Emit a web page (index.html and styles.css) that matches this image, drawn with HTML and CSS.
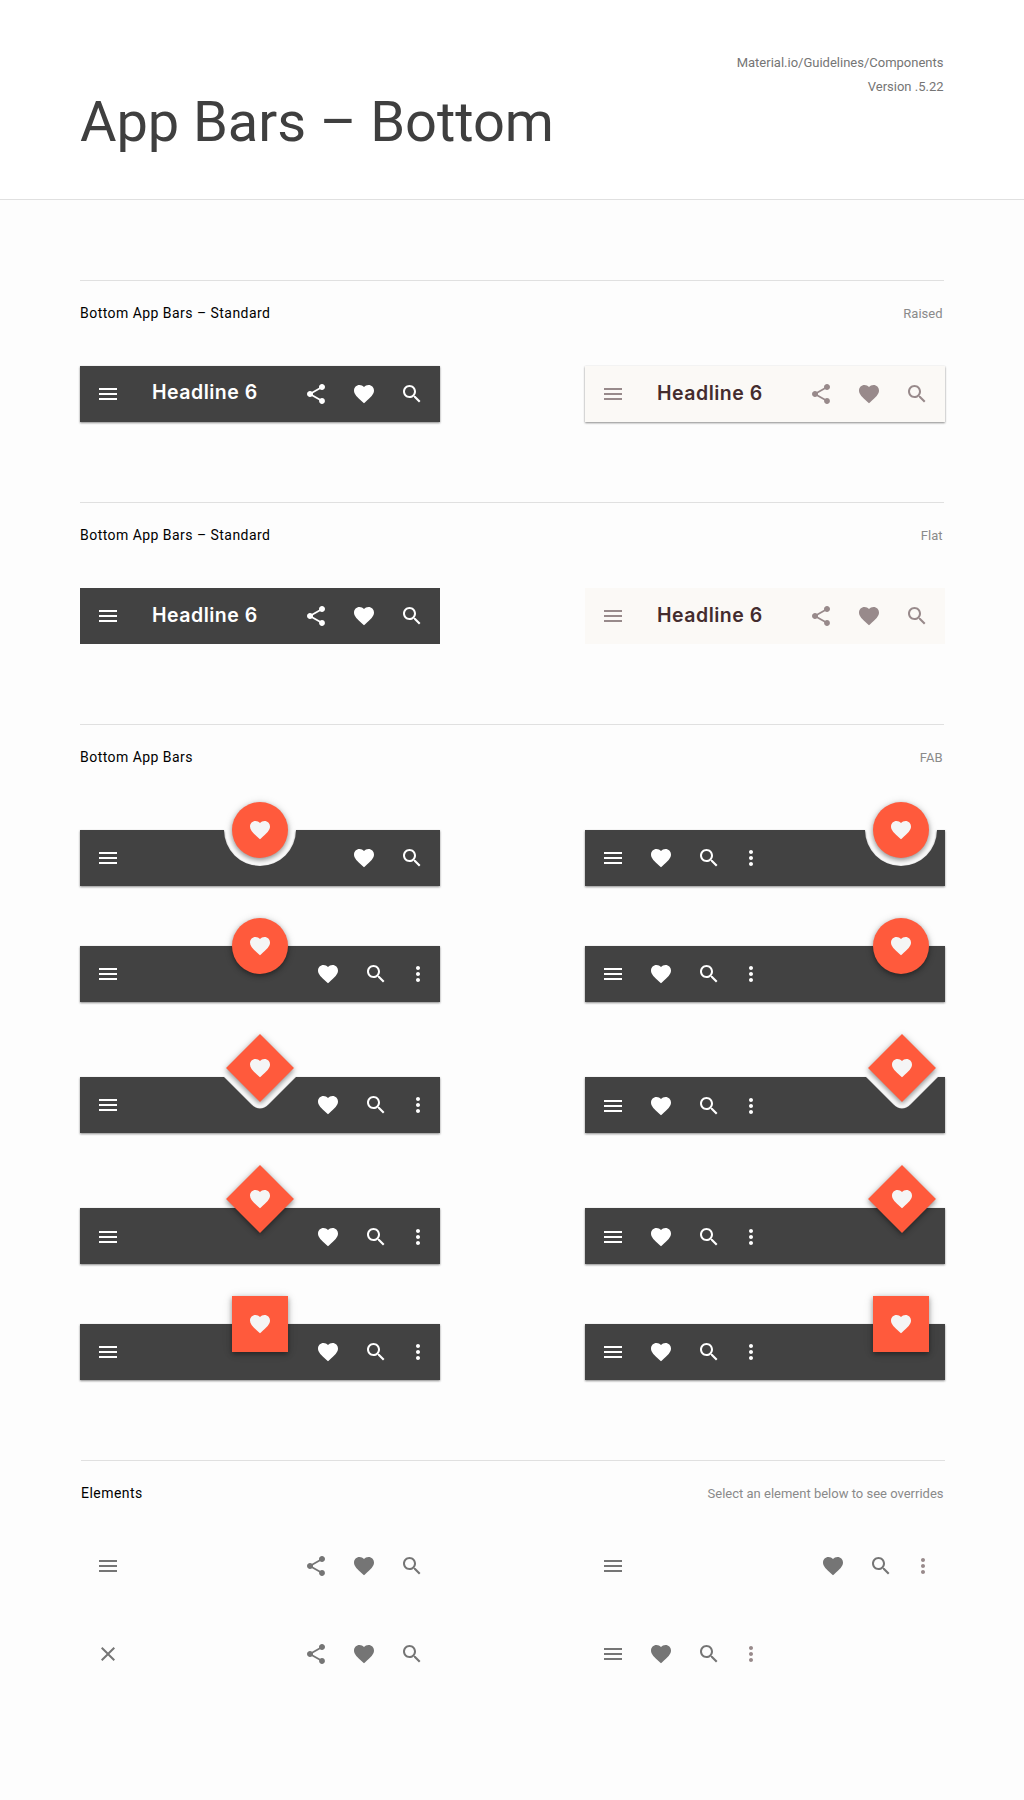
FILE: index.html
```html
<!DOCTYPE html>
<html lang="en">
<head>
<meta charset="utf-8">
<title>App Bars – Bottom</title>
<link rel="stylesheet" href="styles.css">
</head>
<body>
<svg class="sprite" aria-hidden="true">
  <symbol id="menu" viewBox="0 0 24 24"><path d="M3 18h18v-2H3v2zm0-5h18v-2H3v2zm0-7v2h18V6H3z"/></symbol>
  <symbol id="share" viewBox="0 0 24 24"><path d="M18 16.08c-.76 0-1.44.3-1.96.77L8.91 12.7c.05-.23.09-.46.09-.7s-.04-.47-.09-.7l7.05-4.11c.54.5 1.25.81 2.04.81 1.66 0 3-1.34 3-3s-1.34-3-3-3-3 1.34-3 3c0 .24.04.47.09.7L8.04 9.81C7.5 9.31 6.79 9 6 9c-1.66 0-3 1.34-3 3s1.34 3 3 3c.79 0 1.5-.31 2.04-.81l7.12 4.16c-.05.21-.08.43-.08.65 0 1.61 1.31 2.92 2.92 2.92s2.92-1.31 2.92-2.92-1.31-2.92-2.92-2.92z"/></symbol>
  <symbol id="heart" viewBox="0 0 24 24"><path d="M12 21.35l-1.45-1.32C5.4 15.36 2 12.28 2 8.5 2 5.42 4.42 3 7.5 3c1.74 0 3.41.81 4.5 2.09C13.09 3.81 14.76 3 16.5 3 19.58 3 22 5.42 22 8.5c0 3.78-3.4 6.86-8.55 11.54L12 21.35z"/></symbol>
  <symbol id="search" viewBox="0 0 24 24"><path d="M15.5 14h-.79l-.28-.27C15.41 12.59 16 11.11 16 9.5 16 5.91 13.09 3 9.5 3S3 5.91 3 9.5 5.91 16 9.5 16c1.61 0 3.09-.59 4.23-1.57l.27.28v.79l5 4.99L20.49 19l-4.99-5zm-6 0C7.01 14 5 11.99 5 9.5S7.01 5 9.5 5 14 7.01 14 9.5 11.99 14 9.5 14z"/></symbol>
  <symbol id="more" viewBox="6 0 12 24"><path d="M12 8c1.1 0 2-.9 2-2s-.9-2-2-2-2 .9-2 2 .9 2 2 2zm0 2c-1.1 0-2 .9-2 2s.9 2 2 2 2-.9 2-2-.9-2-2-2zm0 6c-1.1 0-2 .9-2 2s.9 2 2 2 2-.9 2-2-.9-2-2-2z"/></symbol>
  <symbol id="close" viewBox="0 0 24 24"><path d="M19 6.41L17.59 5 12 10.59 6.41 5 5 6.41 10.59 12 5 17.59 6.41 19 12 13.41 17.59 19 19 17.59 13.41 12z"/></symbol>
</svg>

<header class="page-header">
  <h1 class="title">App Bars – Bottom</h1>
  <div class="meta"><div>Material.io/Guidelines/Components</div><div>Version .5.22</div></div>
</header>

<main class="page">
  <section class="section">
    <div class="head"><h2 class="label">Bottom App Bars – Standard</h2><span class="note">Raised</span></div>
    <div class="pair">
      <div class="bar raised"><svg class="icon"><use href="#menu"/></svg><span class="headline headline-high">Headline 6</span><div class="actions"><svg class="icon"><use href="#share"/></svg><svg class="icon"><use href="#heart"/></svg><svg class="icon"><use href="#search"/></svg></div></div>
      <div class="bar light raised"><svg class="icon"><use href="#menu"/></svg><span class="headline">Headline 6</span><div class="actions"><svg class="icon"><use href="#share"/></svg><svg class="icon"><use href="#heart"/></svg><svg class="icon"><use href="#search"/></svg></div></div>
    </div>
  </section>

  <section class="section">
    <div class="head"><h2 class="label">Bottom App Bars – Standard</h2><span class="note">Flat</span></div>
    <div class="pair">
      <div class="bar"><svg class="icon"><use href="#menu"/></svg><span class="headline">Headline 6</span><div class="actions"><svg class="icon"><use href="#share"/></svg><svg class="icon"><use href="#heart"/></svg><svg class="icon"><use href="#search"/></svg></div></div>
      <div class="bar light"><svg class="icon"><use href="#menu"/></svg><span class="headline">Headline 6</span><div class="actions"><svg class="icon"><use href="#share"/></svg><svg class="icon"><use href="#heart"/></svg><svg class="icon"><use href="#search"/></svg></div></div>
    </div>
  </section>

  <section class="section">
    <div class="head"><h2 class="label">Bottom App Bars</h2><span class="note">FAB</span></div>
    <div class="fab-rows">
      <div class="pair">
        <div class="bar cut"><span class="surface notch-circle"></span><svg class="icon"><use href="#menu"/></svg><div class="actions"><svg class="icon"><use href="#heart"/></svg><svg class="icon"><use href="#search"/></svg></div><div class="fab circle"><svg class="icon"><use href="#heart"/></svg></div></div>
        <div class="bar cut"><span class="surface notch-circle-end"></span><svg class="icon"><use href="#menu"/></svg><svg class="icon"><use href="#heart"/></svg><svg class="icon"><use href="#search"/></svg><svg class="icon narrow"><use href="#more"/></svg><div class="fab circle end"><svg class="icon"><use href="#heart"/></svg></div></div>
      </div>
      <div class="pair">
        <div class="bar raised"><svg class="icon"><use href="#menu"/></svg><div class="actions"><svg class="icon"><use href="#heart"/></svg><svg class="icon"><use href="#search"/></svg><svg class="icon narrow"><use href="#more"/></svg></div><div class="fab circle"><svg class="icon"><use href="#heart"/></svg></div></div>
        <div class="bar raised"><svg class="icon"><use href="#menu"/></svg><svg class="icon"><use href="#heart"/></svg><svg class="icon"><use href="#search"/></svg><svg class="icon narrow"><use href="#more"/></svg><div class="fab circle end"><svg class="icon"><use href="#heart"/></svg></div></div>
      </div>
      <div class="pair spaced">
        <div class="bar cut"><span class="surface notch-diamond"></span><svg class="icon"><use href="#menu"/></svg><div class="actions"><svg class="icon"><use href="#heart"/></svg><svg class="icon"><use href="#search"/></svg><svg class="icon narrow"><use href="#more"/></svg></div><div class="fab diamond"><svg class="icon"><use href="#heart"/></svg></div></div>
        <div class="bar cut low"><span class="surface notch-diamond-end"></span><svg class="icon"><use href="#menu"/></svg><svg class="icon"><use href="#heart"/></svg><svg class="icon"><use href="#search"/></svg><svg class="icon narrow"><use href="#more"/></svg><div class="fab diamond end"><svg class="icon"><use href="#heart"/></svg></div></div>
      </div>
      <div class="pair spaced">
        <div class="bar raised low"><svg class="icon"><use href="#menu"/></svg><div class="actions"><svg class="icon"><use href="#heart"/></svg><svg class="icon"><use href="#search"/></svg><svg class="icon narrow"><use href="#more"/></svg></div><div class="fab diamond"><svg class="icon"><use href="#heart"/></svg></div></div>
        <div class="bar raised low"><svg class="icon"><use href="#menu"/></svg><svg class="icon"><use href="#heart"/></svg><svg class="icon"><use href="#search"/></svg><svg class="icon narrow"><use href="#more"/></svg><div class="fab diamond end"><svg class="icon"><use href="#heart"/></svg></div></div>
      </div>
      <div class="pair">
        <div class="bar raised"><svg class="icon"><use href="#menu"/></svg><div class="actions"><svg class="icon"><use href="#heart"/></svg><svg class="icon"><use href="#search"/></svg><svg class="icon narrow"><use href="#more"/></svg></div><div class="fab"><svg class="icon"><use href="#heart"/></svg></div></div>
        <div class="bar raised"><svg class="icon"><use href="#menu"/></svg><svg class="icon"><use href="#heart"/></svg><svg class="icon"><use href="#search"/></svg><svg class="icon narrow"><use href="#more"/></svg><div class="fab end"><svg class="icon"><use href="#heart"/></svg></div></div>
      </div>
    </div>
  </section>

  <section class="section elements">
    <div class="head"><h2 class="label">Elements</h2><span class="note">Select an element below to see overrides</span></div>
    <div class="element-rows">
      <div class="pair">
        <div class="bar bare"><svg class="icon"><use href="#menu"/></svg><div class="actions"><svg class="icon"><use href="#share"/></svg><svg class="icon"><use href="#heart"/></svg><svg class="icon"><use href="#search"/></svg></div></div>
        <div class="bar bare"><svg class="icon"><use href="#menu"/></svg><div class="actions"><svg class="icon"><use href="#heart"/></svg><svg class="icon"><use href="#search"/></svg><svg class="icon narrow"><use href="#more"/></svg></div></div>
      </div>
      <div class="pair">
        <div class="bar bare"><svg class="icon"><use href="#close"/></svg><div class="actions"><svg class="icon"><use href="#share"/></svg><svg class="icon"><use href="#heart"/></svg><svg class="icon"><use href="#search"/></svg></div></div>
        <div class="bar bare"><svg class="icon"><use href="#menu"/></svg><svg class="icon"><use href="#heart"/></svg><svg class="icon"><use href="#search"/></svg><svg class="icon narrow"><use href="#more"/></svg></div>
      </div>
    </div>
  </section>
</main>
</body>
</html>
```
FILE: styles.css
```css
* { box-sizing: border-box; }

body {
  margin: 0;
  min-height: 1800px;
  background: #fdfdfd;
  font-family: Roboto, "Liberation Sans", sans-serif;
}

.sprite { display: none; }

.page-header {
  display: flex;
  justify-content: space-between;
  height: 200px;
  padding: 51px 80.5px 0 80px;
  background: #fff;
  border-bottom: 1px solid #e0e0e0;
}

.title {
  margin: 38px 0 0;
  font-size: 56px;
  line-height: 66px;
  font-weight: 400;
  letter-spacing: -0.07px;
  color: #3f3f3f;
}

.meta {
  font-size: 13px;
  line-height: 24px;
  text-align: right;
  color: #757575;
}

.page { padding: 80px 80px 0; }

.section { padding-bottom: 80px; }

.head {
  display: flex;
  justify-content: space-between;
  height: 86px;
  padding: 22px 1.5px 0 0;
  border-top: 1px solid #e0e0e0;
  line-height: 20px;
}

.label {
  margin: 0;
  font-size: 14px;
  font-weight: 400;
  letter-spacing: 0.46px;
  color: #000;
}

.note {
  padding-top: 1px;
  font-size: 13px;
  color: #8a8a8a;
}

.pair {
  display: grid;
  grid-template-columns: 360px 360px;
  column-gap: 145px;
}

.fab-rows {
  display: flex;
  flex-direction: column;
  gap: 60px;
  padding-top: 20px;
}

.spaced { padding-top: 15px; }

.bar {
  position: relative;
  display: flex;
  align-items: center;
  gap: 24px;
  height: 56px;
  padding: 0 16px;
  background: #424242;
  color: #fff;
}

.raised { box-shadow: 0 1px 2px rgba(0, 0, 0, 0.45), 0 0 1px rgba(0, 0, 0, 0.05); }

.low { padding-top: 2px; }

.light {
  background: #fbf9f6;
  color: #988a8b;
}

.icon {
  flex: none;
  display: block;
  position: relative;
  width: 24px;
  height: 24px;
  fill: currentColor;
}

.narrow { width: 12px; }

.actions {
  display: flex;
  gap: 24px;
  margin-left: auto;
}

.headline {
  margin: -2px 0 0 8px;
  font-family: Inter, "Liberation Sans", sans-serif;
  font-size: 19.5px;
  font-weight: 600;
  line-height: 24px;
  letter-spacing: 0.5px;
  white-space: nowrap;
}

.headline-high { margin-top: -4px; }

.light .headline { color: #442c2e; }

/* Bars whose surface is notched around the floating button */
.cut { background: none; }

.surface {
  position: absolute;
  inset: 0;
  filter: drop-shadow(0 1px 1px rgba(0, 0, 0, 0.45));
}

.surface::before {
  content: "";
  display: block;
  height: 56px;
  background: #424242;
}

.notch-circle::before { clip-path: path("M0 0H144A36 36 0 0 0 216 0H360V56H0Z"); }
.notch-circle-end::before { clip-path: path("M0 0H280A36 36 0 0 0 352 0H360V56H0Z"); }
.notch-diamond::before { clip-path: path("M0 0H144L171.5 27.5Q175.5 31.5 180 31.5T188.5 27.5L216 0H360V56H0Z"); }
.notch-diamond-end::before { clip-path: path("M0 0H281L308.5 27.5Q312.5 31.5 317 31.5T325.5 27.5L353 0H360V56H0Z"); }

.fab {
  position: absolute;
  top: -28px;
  left: 152px;
  display: grid;
  place-items: center;
  width: 56px;
  height: 56px;
  color: #f5f5f5;
  background: #ff5a3c;
  box-shadow: 0 2px 5px rgba(0, 0, 0, 0.38), 0 1px 10px rgba(0, 0, 0, 0.12);
}

.end { left: 288px; }

.circle { border-radius: 50%; }

.diamond {
  top: -37px;
  background: none;
  box-shadow: none;
}

.diamond.end { left: 289px; }

.diamond::before {
  content: "";
  position: absolute;
  inset: 4px;
  transform: rotate(45deg);
  background: #ff5a3c;
  box-shadow: 1.4px 1.4px 5px rgba(0, 0, 0, 0.38), 0.7px 0.7px 10px rgba(0, 0, 0, 0.12);
}

/* The last section shows icons on their own, without a surface */
.elements .head {
  height: 78px;
  margin: 0 -1px 0 1px;
}

.element-rows {
  display: flex;
  flex-direction: column;
  gap: 32px;
}

.bare {
  background: none;
  color: #757575;
}

.bare .narrow { color: #988a8b; }
```
